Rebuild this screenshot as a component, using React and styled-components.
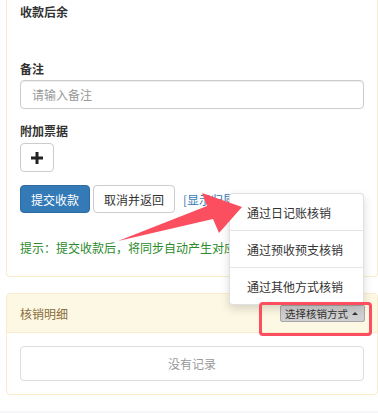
import React from "react";
import styled, { createGlobalStyle } from "styled-components";

const GlobalStyle = createGlobalStyle`
  body {
    margin: 0;
    background: #fff;
    font-family: "Noto Sans CJK SC", "Noto Sans", sans-serif;
    font-size: 12px;
    color: #333;
    overflow: hidden;
  }
`;

const Page = styled.div`
  position: relative;
  width: 378px;
  height: 413px;
  overflow: hidden;
`;

const Panel = styled.div`
  margin: ${(p) => (p.$first ? "0" : "16px")} 0 0 6px;
  border: 1px solid #faebcc;
  border-top: ${(p) => (p.$first ? "none" : "1px solid #faebcc")};
  border-radius: ${(p) => (p.$first ? "0 0 4px 4px" : "4px")};
  background: #fff;
`;

const PanelBody = styled.div`
  padding: ${(p) => p.$pad || "13px"};
`;

const PanelHeading = styled.div`
  display: flex;
  align-items: center;
  justify-content: space-between;
  height: 38px;
  padding: 0 12px 0 13px;
  background: #fcf8e3;
  color: #8a6d3b;
  border-bottom: 1px solid #faebcc;
  border-radius: 3px 3px 0 0;
`;

const Label = styled.div`
  font-weight: bold;
  line-height: 20px;
  color: #333;
`;

const Group = styled.div`
  margin-bottom: ${(p) => p.$mb || 0}px;
`;

const Blank = styled.div`
  height: 22px;
`;

const Input = styled.input`
  display: block;
  box-sizing: border-box;
  width: 100%;
  height: 29px;
  margin-top: 1px;
  padding: 0 11px;
  font-family: inherit;
  font-size: 12px;
  border: 1px solid #ccc;
  border-radius: 4px;
  box-shadow: inset 0 1px 1px rgba(0, 0, 0, 0.075);
  &::placeholder {
    color: #999;
  }
`;

const Btn = styled.button`
  box-sizing: border-box;
  height: ${(p) => p.$h || 28}px;
  padding: 0 10px;
  font-family: inherit;
  font-size: 12px;
  border-radius: 4px;
  border: 1px solid ${(p) => (p.$primary ? "#2e6da4" : "#ccc")};
  background: ${(p) => (p.$primary ? "#337ab7" : "#fff")};
  color: ${(p) => (p.$primary ? "#fff" : "#333")};
  display: inline-flex;
  align-items: center;
  justify-content: center;
`;

const PlusBtn = styled(Btn)`
  width: 34px;
  margin-top: 2px;
  padding: 0;
`;

const ButtonRow = styled.div`
  display: flex;
  align-items: center;
  gap: 3px;
  margin-top: 13px;
`;

/* the open menu covers the tail of this link, so it is clipped at the menu edge */
const Link = styled.a`
  margin-left: 5px;
  width: 47px;
  overflow: hidden;
  color: #337ab7;
  white-space: nowrap;
`;

const Hint = styled.div`
  margin-top: 25px;
  width: 209px;
  line-height: 20px;
  color: #2b8a2b;
  white-space: nowrap;
  overflow: hidden;
`;

const SelectBtn = styled.button`
  display: inline-flex;
  align-items: center;
  gap: 4px;
  height: 17px;
  padding: 0 6px 0 4px;
  font-family: inherit;
  font-size: 10.5px;
  color: #333;
  background: #cfcfcf;
  border: 1px solid #a8a8a8;
  border-radius: 2px;
`;

const Caret = styled.span`
  width: 0;
  height: 0;
  border-left: 3px solid transparent;
  border-right: 3px solid transparent;
  border-bottom: 3px solid #333;
`;

const Empty = styled.div`
  height: 35px;
  display: flex;
  align-items: center;
  justify-content: center;
  border: 1px solid #ddd;
  border-radius: 4px;
  color: #999;
  box-sizing: border-box;
`;

const Footer = styled.div`
  margin-top: 16px;
  height: 20px;
  background: #f7f7fb;
`;

const Menu = styled.ul`
  position: absolute;
  left: 229px;
  top: 193px;
  width: 135px;
  margin: 0;
  padding: 0;
  list-style: none;
  background: #fff;
  border: 1px solid rgba(0, 0, 0, 0.12);
  border-radius: 4px;
  box-shadow: 0 4px 10px rgba(0, 0, 0, 0.15);
  box-sizing: border-box;
`;

const MenuItem = styled.li`
  height: 36px;
  display: flex;
  align-items: center;
  padding-left: 17px;
  color: #333;
  border-top: ${(p) => (p.$divider ? "1px solid #e5e5e5" : "none")};
`;

const Highlight = styled.div`
  position: absolute;
  left: 259px;
  top: 302px;
  width: 113px;
  height: 34px;
  box-sizing: border-box;
  border: 3px solid #fb4e5e;
  border-radius: 4px;
`;

const ArrowSvg = styled.svg`
  position: absolute;
  left: 0;
  top: 0;
  pointer-events: none;
`;

export default function App() {
  return (
    <Page>
      <GlobalStyle />
      <Panel $first>
        <PanelBody $pad="2px 13px 18px">
          <Group $mb={15}>
            <Label>收款后余</Label>
            <Blank />
          </Group>
          <Group $mb={12}>
            <Label>备注</Label>
            <Input placeholder="请输入备注" />
          </Group>
          <Group>
            <Label>附加票据</Label>
            <PlusBtn $h={29}>
              <svg width="12" height="12" viewBox="0 0 12 12">
                <rect x="4.5" y="0" width="3" height="12" fill="#222" />
                <rect x="0" y="4.5" width="12" height="3" fill="#222" />
              </svg>
            </PlusBtn>
          </Group>
          <ButtonRow>
            <Btn $primary>提交收款</Btn>
            <Btn>取消并返回</Btn>
            <Link>[显示归属项目]</Link>
          </ButtonRow>
          <Hint>提示：提交收款后，将同步自动产生对应的收款记录</Hint>
        </PanelBody>
      </Panel>

      <Panel>
        <PanelHeading>
          <span>核销明细</span>
          <SelectBtn>
            选择核销方式
            <Caret />
          </SelectBtn>
        </PanelHeading>
        <PanelBody>
          <Empty>没有记录</Empty>
        </PanelBody>
      </Panel>
      <Footer />

      <Menu>
        <MenuItem>通过日记账核销</MenuItem>
        <MenuItem $divider>通过预收预支核销</MenuItem>
        <MenuItem $divider>通过其他方式核销</MenuItem>
      </Menu>
      <Highlight />
      <ArrowSvg width="378" height="413" viewBox="0 0 378 413">
        <polygon
          points="118,241 207,206 202,193 242,207 219,233 213,219"
          fill="#fb4e5e"
        />
      </ArrowSvg>
    </Page>
  );
}
